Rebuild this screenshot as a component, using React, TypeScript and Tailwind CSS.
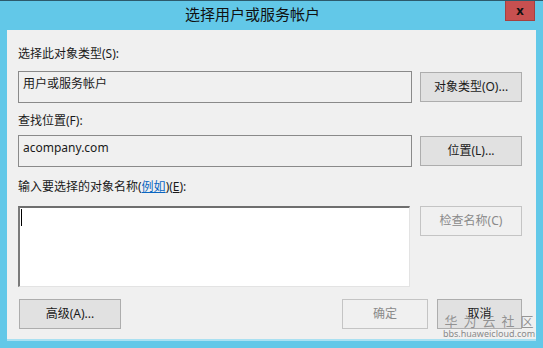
const font = '[font-family:"Noto_Sans","Noto_Sans_CJK_SC",sans-serif]'

const Button = ({
  children,
  disabled,
  className = '',
}: {
  children: React.ReactNode
  disabled?: boolean
  className?: string
}) => (
  <div
    className={`flex h-[30px] items-center justify-center border text-[12px] ${
      disabled
        ? 'border-[#c4c4c4] bg-[#f0f0f0] text-[#8a8a8a]'
        : 'border-[#adadad] bg-[#e1e1e1] text-[#1a1a1a]'
    } ${className}`}
  >
    {children}
  </div>
)

export default function App() {
  return (
    <div className={`relative flex h-[348px] w-[543px] flex-col border-t border-[#2d5a6c] bg-[#62c8e8] ${font}`}>
      {/* title bar */}
      <div className="flex h-[29px] items-start justify-between">
        <div className="w-[505px] pt-[3px] text-center text-[15px] leading-[20px] text-[#111]">
          选择用户或服务帐户
        </div>
        <div className="mr-[8px] flex h-[20px] w-[30px] items-center justify-center border border-t-0 border-[#a64040] bg-[#c75050] text-[13px] font-bold leading-none text-[#111]">
          x
        </div>
      </div>

      {/* client area */}
      <div className="mx-[7px] flex h-[309px] flex-col bg-[#f0f0f0] px-[11px] pt-[16px] text-[12px] leading-[16px] text-[#1a1a1a]">
        <div>选择此对象类型(S):</div>
        <div className="mt-[9px] flex items-start gap-[8px]">
          <div className="h-[32px] w-[394px] border border-[#8a8a8a] px-[4px] pt-[4px]">用户或服务帐户</div>
          <Button className="mt-[1px] w-[102px]">对象类型(O)...</Button>
        </div>

        <div className="mt-[10px]">查找位置(F):</div>
        <div className="mt-[6px] flex items-start gap-[8px]">
          <div className="h-[32px] w-[394px] border border-[#8a8a8a] px-[4px] pt-[4px]">acompany.com</div>
          <Button className="mt-[1px] w-[102px]">位置(L)...</Button>
        </div>

        <div className="mt-[12px]">
          输入要选择的对象名称(<span className="text-[#0a66c2] underline">例如</span>)(<span className="underline">E</span>):
        </div>
        <div className="mt-[11px] flex items-start gap-[10px]">
          <div className="h-[81px] w-[392px] border-t-2 border-r border-b border-l-2 border-t-[#6e6e6e] border-r-[#e3e3e3] border-b-[#e3e3e3] border-l-[#7a7a7a] bg-white pt-[1px] pl-[1px]">
            <div className="h-[17px] w-[1px] bg-black" />
          </div>
          <Button disabled className="w-[102px]">
            检查名称(C)
          </Button>
        </div>

        <div className="mt-[12px] flex w-[504px] items-start">
          <Button className="ml-[1px] w-[102px]">高级(A)...</Button>
          <Button disabled className="ml-auto w-[86px]">
            确定
          </Button>
          <Button className="ml-[9px] w-[85px] border-[#7a7a7a]">取消</Button>
        </div>
      </div>
      <div className="mx-[7px] h-[2px] bg-[#a9e0f1]" />

      {/* watermark */}
      <div className="pointer-events-none absolute top-[312px] left-[444px] flex w-[90px] flex-col items-center whitespace-nowrap text-[#7d7d7d]/80">
        <div className="pl-[6px] text-[13px] leading-[16px] tracking-[6px]">华为云社区</div>
        <div className="text-[9px] leading-[10px] text-[#8a8a8a]">bbs.huaweicloud.com</div>
      </div>
    </div>
  )
}
